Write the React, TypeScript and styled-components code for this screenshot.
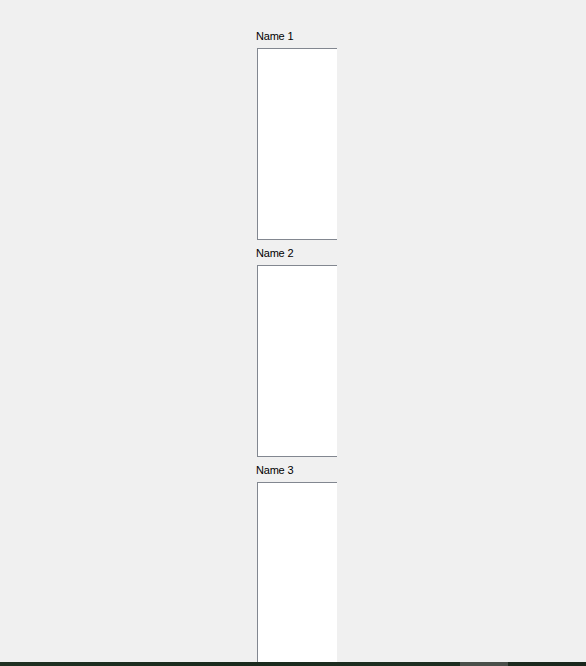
import styled, { createGlobalStyle } from 'styled-components';

const GlobalStyle = createGlobalStyle`
  html, body {
    margin: 0;
    padding: 0;
    background: #f0f0f0;
  }
`;

const Page = styled.div`
  height: 666px;
  display: flex;
  flex-direction: column;
  overflow: hidden;
  font-family: 'Liberation Sans', Arial, sans-serif;
`;

const Content = styled.div`
  flex: 1;
  min-height: 0;
  overflow: hidden;
  padding: 30px 0 0 256px;
  display: flex;
  flex-direction: column;
  gap: 7px;
`;

const Group = styled.div`
  display: flex;
  flex-direction: column;
  gap: 5px;
  flex-shrink: 0;
`;

const Label = styled.span`
  font-size: 11px;
  line-height: 13px;
  letter-spacing: -0.2px;
  color: #000;
`;

const ListBox = styled.div`
  margin-left: 1px;
  width: 79px;
  height: 190px;
  background: #fff;
  border: 1px solid #828790;
  border-right: none;
`;

const Taskbar = styled.div`
  height: 4px;
  flex-shrink: 0;
  display: flex;
  background: linear-gradient(90deg, #1f3022 0%, #1a2a1d 40%, #1e2e21 70%, #1a261c 100%);
`;

const TaskSlot = styled.div<{ $w: number; $active?: boolean }>`
  width: ${({ $w }) => $w}px;
  background: ${({ $active }) => ($active ? '#4a4f4a' : 'transparent')};
`;

const names = ['Name 1', 'Name 2', 'Name 3'];

const App = () => {
  return (
    <Page>
      <GlobalStyle />
      <Content>
        {names.map((name) => (
          <Group key={name}>
            <Label>{name}</Label>
            <ListBox />
          </Group>
        ))}
      </Content>
      <Taskbar>
        <TaskSlot $w={460} />
        <TaskSlot $w={48} $active />
      </Taskbar>
    </Page>
  );
};

export default App;
